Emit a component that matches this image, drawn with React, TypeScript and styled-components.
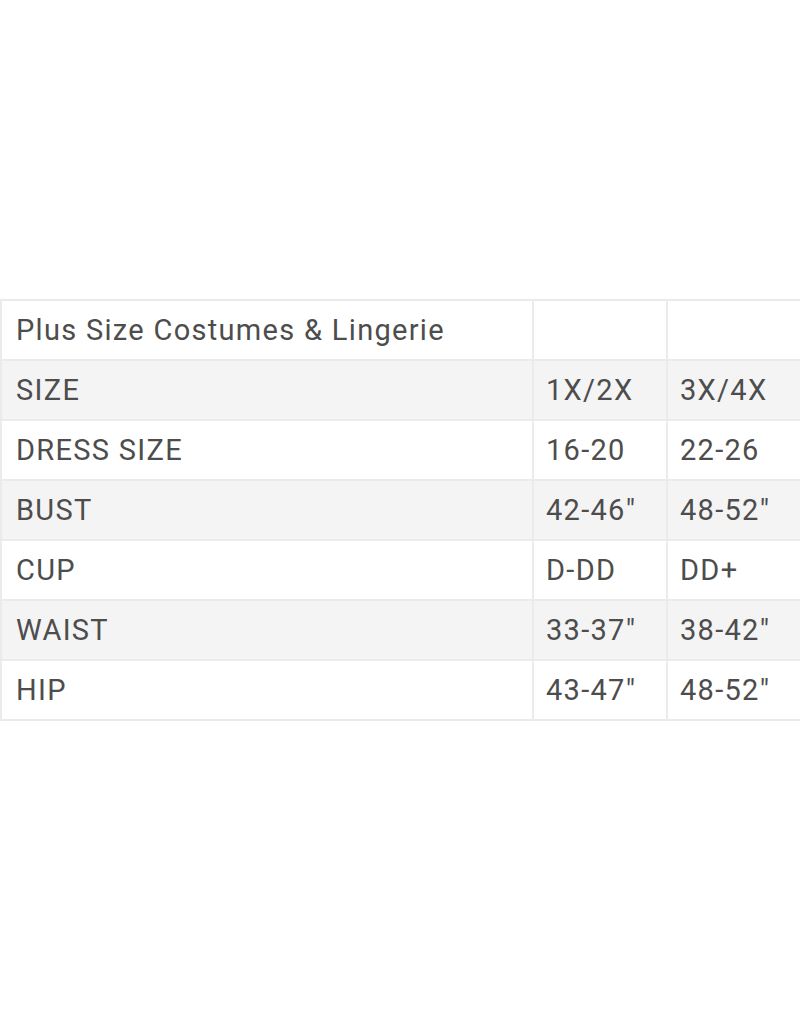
import styled, { createGlobalStyle } from 'styled-components'

const GlobalStyle = createGlobalStyle`
  html, body {
    margin: 0;
    padding: 0;
    background: #ffffff;
    overflow: hidden;
  }
`

const Page = styled.div`
  width: 800px;
  height: 1024px;
  padding-top: 299px;
  box-sizing: border-box;
  overflow: hidden;
`

const SizeTable = styled.table`
  border-collapse: collapse;
  table-layout: fixed;
  width: 840px;
  font-family: Roboto, 'Liberation Sans', sans-serif;
  font-size: 29px;
  letter-spacing: 1.3px;
  color: #4d4d4d;
`

const Col = styled.col<{ $width: number }>`
  width: ${(props) => props.$width}px;
`

const Row = styled.tr<{ $shaded: boolean }>`
  height: 60px;
  background: ${(props) => (props.$shaded ? '#f4f4f4' : '#ffffff')};
`

const Cell = styled.td`
  border: 2px solid #ebebeb;
  padding: 0 0 0 12px;
  height: 58px;
  white-space: nowrap;
  vertical-align: middle;
`

const LabelCell = styled(Cell)`
  padding-left: 14px;
`

type SizeRow = {
  label: string,
  values: string[]
}

const rows: SizeRow[] = [
  { label: 'Plus Size Costumes & Lingerie', values: ['', ''] },
  { label: 'SIZE', values: ['1X/2X', '3X/4X'] },
  { label: 'DRESS SIZE', values: ['16-20', '22-26'] },
  { label: 'BUST', values: ['42-46"', '48-52"'] },
  { label: 'CUP', values: ['D-DD', 'DD+'] },
  { label: 'WAIST', values: ['33-37"', '38-42"'] },
  { label: 'HIP', values: ['43-47"', '48-52"'] },
]

export default function App() {
  return (
    <>
      <GlobalStyle />
      <Page>
        <SizeTable>
          <colgroup>
            <Col $width={532} />
            <Col $width={134} />
            <Col $width={174} />
          </colgroup>
          <tbody>
            {rows.map((row, index) => (
              <Row key={row.label} $shaded={index % 2 === 1}>
                <LabelCell>{row.label}</LabelCell>
                {row.values.map((value, i) => (
                  <Cell key={`${row.label}-${i}`}>{value}</Cell>
                ))}
              </Row>
            ))}
          </tbody>
        </SizeTable>
      </Page>
    </>
  )
}
